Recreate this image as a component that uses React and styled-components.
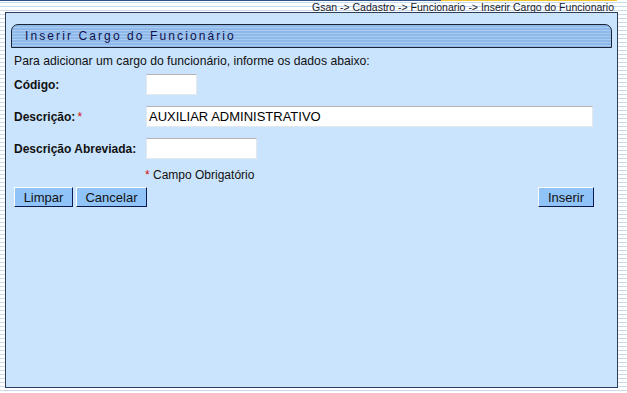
import React from 'react';
import styled, {createGlobalStyle} from 'styled-components';

const GlobalStyle = createGlobalStyle`
  html, body {
    margin: 0;
    padding: 0;
  }
  body {
    width: 627px;
    height: 393px;
    overflow: hidden;
    font-family: "Liberation Sans", Arial, sans-serif;
    background: repeating-linear-gradient(
      to bottom,
      #ffffff 0px,
      #ffffff 2px,
      #c9dcec 2px,
      #c9dcec 3px,
      #ffffff 3px,
      #ffffff 4px
    );
  }
`;

const Page = styled.div`
  display: flex;
  flex-direction: column;
  width: 627px;
  height: 393px;
`;

const TopBar = styled.div`
  display: flex;
  justify-content: flex-end;
  height: 12px;
  padding-right: 13px;
  background: linear-gradient(to right, #2f4f86 0, #2f4f86 441px, #f4c430 441px, #f4c430 617px, transparent 617px) top / 100% 1px no-repeat;
`;

const Crumbs = styled.div`
  font-size: 10.5px;
  line-height: 12px;
  padding-top: 1px;
  color: #1a1a2a;
  white-space: nowrap;
`;

const Panel = styled.div`
  margin-left: 5px;
  width: 613px;
  height: 376px;
  box-sizing: border-box;
  border: 1.5px solid #2c3e5c;
  background: #cbe4fd;
  display: flex;
  flex-direction: column;
  padding: 11px 5px 0 5px;
`;

const Header = styled.div`
  height: 24px;
  box-sizing: border-box;
  border: 1px solid #1b2433;
  border-radius: 7px 7px 0 0;
  display: flex;
  align-items: center;
  padding-left: 13px;
  background: repeating-linear-gradient(
    to bottom,
    #8fb9e9 0px,
    #8fb9e9 2px,
    #a9cbf2 2px,
    #a9cbf2 3px
  );
  color: #10124a;
  font-size: 12px;
  letter-spacing: 2.1px;
`;

const Body = styled.div`
  display: flex;
  flex-direction: column;
  padding: 0 0 0 3px;
`;

const Intro = styled.div`
  font-size: 12.2px;
  color: #111;
  margin-top: 6px;
  line-height: 14px;
`;

const Form = styled.div`
  display: grid;
  grid-template-columns: 132px 1fr;
  row-gap: 11px;
  align-items: center;
  margin-top: 6px;
`;

const Label = styled.div`
  font-size: 12px;
  font-weight: bold;
  color: #111;
`;

const Star = styled.span`
  color: #d01010;
  font-weight: normal;
  margin-left: ${p => (p.$lead ? 0 : 2)}px;
`;

const Input = styled.input`
  width: ${p => p.$w}px;
  height: 21px;
  box-sizing: border-box;
  border: 1px solid #e4e8ec;
  border-top-color: #b3b3b3;
  background: #fff;
  font-family: "Liberation Sans", Arial, sans-serif;
  font-size: 13px;
  color: #000;
  padding: 0 2px;
  outline: none;
`;

const Note = styled.div`
  font-size: 12px;
  color: #111;
  margin: 9px 0 0 131px;
`;

const Actions = styled.div`
  display: flex;
  align-items: center;
  gap: 3px;
  margin-top: 5px;
  padding-right: 18px;
`;

const Spacer = styled.div`
  flex: 1;
`;

const Button = styled.button`
  width: ${p => p.$w}px;
  height: 20px;
  box-sizing: border-box;
  padding: 0;
  background: #90c3f7;
  border: 1px solid;
  border-color: #ffffff #0c1a52 #0c1a52 #ffffff;
  font-family: "Liberation Sans", Arial, sans-serif;
  font-size: 13px;
  color: #111;
`;

export default function App() {
  return (
    <Page>
      <GlobalStyle />
      <TopBar>
        <Crumbs>Gsan -&gt; Cadastro -&gt; Funcionario -&gt; Inserir Cargo do Funcionario</Crumbs>
      </TopBar>
      <Panel>
        <Header>Inserir Cargo do Funcionário</Header>
        <Body>
          <Intro>Para adicionar um cargo do funcionário, informe os dados abaixo:</Intro>
          <Form>
            <Label>Código:</Label>
            <Input $w={51} defaultValue="" />
            <Label>Descrição:<Star>*</Star></Label>
            <Input $w={447} defaultValue="AUXILIAR ADMINISTRATIVO" />
            <Label>Descrição Abreviada:</Label>
            <Input $w={111} defaultValue="" />
          </Form>
          <Note><Star $lead>*</Star> Campo Obrigatório</Note>
          <Actions>
            <Button $w={59}>Limpar</Button>
            <Button $w={71}>Cancelar</Button>
            <Spacer />
            <Button $w={56}>Inserir</Button>
          </Actions>
        </Body>
      </Panel>
    </Page>
  );
}
